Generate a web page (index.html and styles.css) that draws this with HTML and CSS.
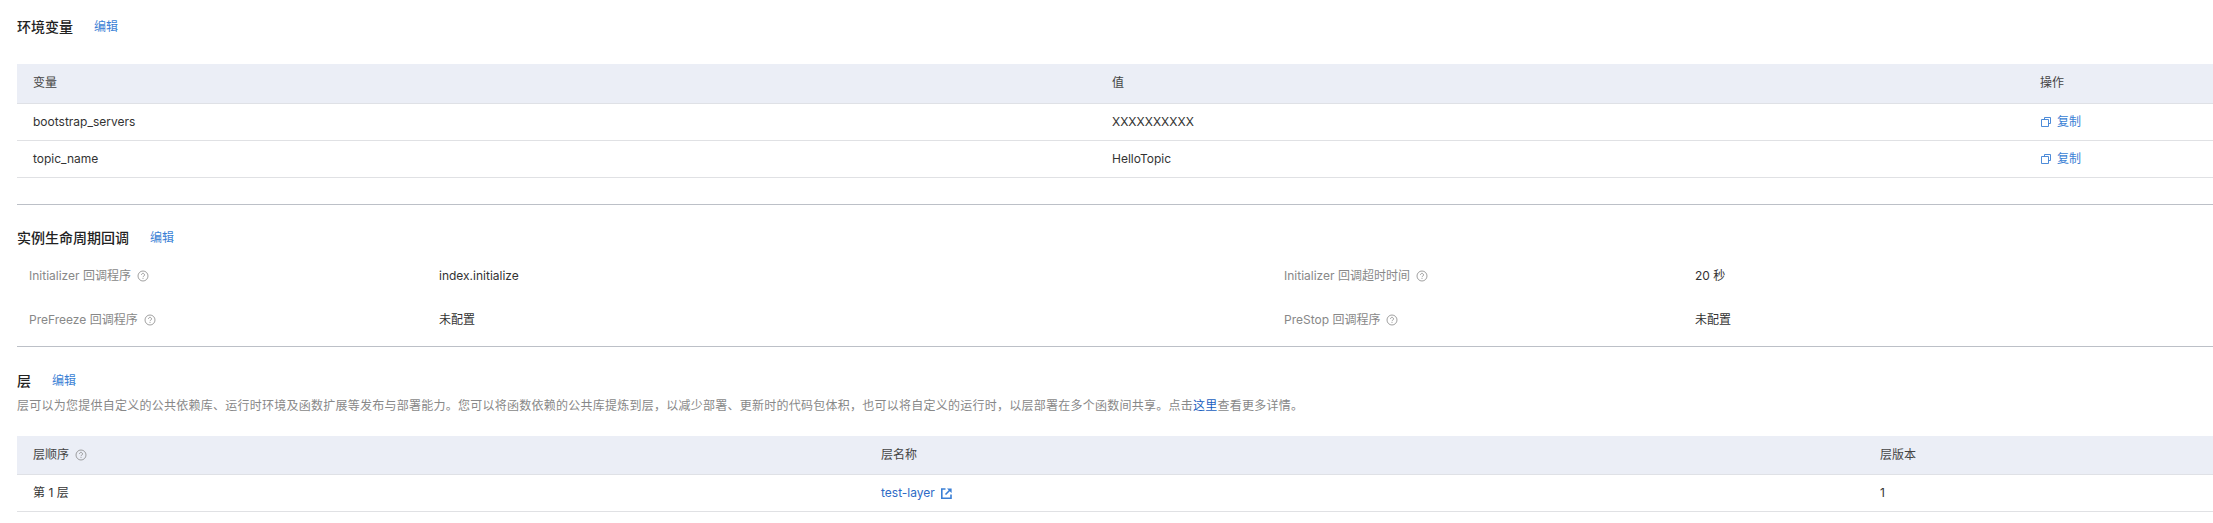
FILE: index.html
```html
<!DOCTYPE html>
<html lang="zh">
<head>
<meta charset="utf-8">
<title>函数配置</title>
<link rel="stylesheet" href="styles.css">
</head>
<body>
<svg class="defs" width="0" height="0" aria-hidden="true">
  <symbol id="help" viewBox="0 0 12 12">
    <circle cx="6" cy="6" r="5" fill="none" stroke="currentColor" stroke-width="0.8"/>
    <path d="M4.5 4.8a1.5 1.5 0 1 1 2.3 1.3c-.5.3-.8.6-.8 1.1" fill="none" stroke="currentColor" stroke-width="0.8"/>
    <rect x="5.6" y="8" width="0.8" height="0.9" fill="currentColor"/>
  </symbol>
  <symbol id="copy" viewBox="0 0 10 10">
    <path d="M3.5 2.5V.5h6v6H7.5M.5 2.5h7v7h-7z" fill="none" stroke="currentColor" stroke-width="0.9"/>
  </symbol>
  <symbol id="ext" viewBox="0 0 11 11">
    <path d="M4.5 1H.8v9.2H10V6.5" fill="none" stroke="currentColor" stroke-width="1.6"/>
    <path d="M4.5 6.5 9 2" fill="none" stroke="currentColor" stroke-width="1.6"/>
    <path d="M6 .4h4.6V5z" fill="currentColor"/>
  </symbol>
</svg>
<main class="page">
  <section class="env">
    <div class="heading"><h3 class="title">环境变量</h3><a class="edit">编辑</a></div>
    <table class="table env-table">
      <thead><tr><th class="c-var">变量</th><th class="c-val">值</th><th>操作</th></tr></thead>
      <tbody>
        <tr><td>bootstrap_servers</td><td>XXXXXXXXXX</td><td><a class="link copy"><svg class="ico-copy"><use href="#copy"/></svg>复制</a></td></tr>
        <tr><td>topic_name</td><td>HelloTopic</td><td><a class="link copy"><svg class="ico-copy"><use href="#copy"/></svg>复制</a></td></tr>
      </tbody>
    </table>
  </section>
  <section class="life">
    <div class="heading"><h3 class="title">实例生命周期回调</h3><a class="edit">编辑</a></div>
    <div class="grid">
      <div class="label">Initializer 回调程序<svg class="ico-help"><use href="#help"/></svg></div>
      <div class="value">index.initialize</div>
      <div class="label">Initializer 回调超时时间<svg class="ico-help"><use href="#help"/></svg></div>
      <div class="value">20 秒</div>
      <div class="label">PreFreeze 回调程序<svg class="ico-help"><use href="#help"/></svg></div>
      <div class="value">未配置</div>
      <div class="label">PreStop 回调程序<svg class="ico-help"><use href="#help"/></svg></div>
      <div class="value">未配置</div>
    </div>
  </section>
  <section class="layer">
    <div class="heading"><h3 class="title">层</h3><a class="edit">编辑</a></div>
    <p class="desc">层可以为您提供自定义的公共依赖库、运行时环境及函数扩展等发布与部署能力。您可以将函数依赖的公共库提炼到层，以减少部署、更新时的代码包体积，也可以将自定义的运行时，以层部署在多个函数间共享。点击<a class="here">这里</a>查看更多详情。</p>
    <table class="table layer-table">
      <thead><tr><th class="c-order">层顺序<svg class="ico-help"><use href="#help"/></svg></th><th class="c-name">层名称</th><th>层版本</th></tr></thead>
      <tbody>
        <tr><td>第 1 层</td><td><a class="link">test-layer<svg class="ico-ext"><use href="#ext"/></svg></a></td><td>1</td></tr>
      </tbody>
    </table>
  </section>
</main>
</body>
</html>
```
FILE: styles.css
```css
* { box-sizing: border-box; }
html, body { margin: 0; padding: 0; background: #fff; }
body {
  font-family: Inter, "Noto Sans CJK SC", "Noto Sans", sans-serif;
  font-size: 12px;
  line-height: 20px;
  color: #333;
  overflow: hidden;
}
.defs { position: absolute; }
.page { padding: 17px 0 0 17px; width: 2213px; }
.heading { display: flex; align-items: center; height: 20px; }
.title { margin: 0; font-size: 14px; font-weight: 500; color: #222; line-height: 20px; }
.edit { margin-left: 21px; color: #3a7fd5; font-size: 12px; }
.table { width: 100%; border-collapse: collapse; table-layout: fixed; }
.table th {
  height: 39px;
  background: #ebeef6;
  border-bottom: 1px solid #dfe1e6;
  font-weight: 400;
  text-align: left;
  padding: 0 16px;
  color: #444;
}
.table td { height: 37px; border-bottom: 1px solid #e0e1e4; padding: 0 16px; color: #333; }
.env-table { margin-top: 27px; }
.c-var { width: 1079px; }
.c-val { width: 928px; }
.env { padding-bottom: 26px; border-bottom: 1px solid #bcc0c7; margin-bottom: 23px; }
.link { color: #2e6bc6; display: inline-flex; align-items: center; }
.copy { color: #3a7fd5; padding: 1px 0 0 1px; }
.ico-copy { width: 10px; height: 10px; margin-right: 6px; }
.ico-help { width: 12px; height: 12px; margin-left: 6px; color: #888; vertical-align: -2px; }
.ico-ext { width: 11px; height: 11px; margin-left: 6px; color: #3a7fd5; }
.grid {
  display: grid;
  grid-template-columns: 422px 833px 423px 1fr;
  grid-auto-rows: 44px;
  margin-top: 6px;
}
.label, .value { padding-left: 12px; display: flex; align-items: center; }
.label { color: #888; }
.value { padding-left: 0; color: #333; }
.life { padding-bottom: 4px; border-bottom: 1px solid #bcc0c7; margin-bottom: 24px; }
.desc { margin: 5px 0 0; color: #888; font-size: 12px; letter-spacing: 0.25px; }
.here { color: #1a5fc0; }
.layer-table { margin-top: 20px; }
.c-order { width: 848px; }
.c-name { width: 999px; }
```
